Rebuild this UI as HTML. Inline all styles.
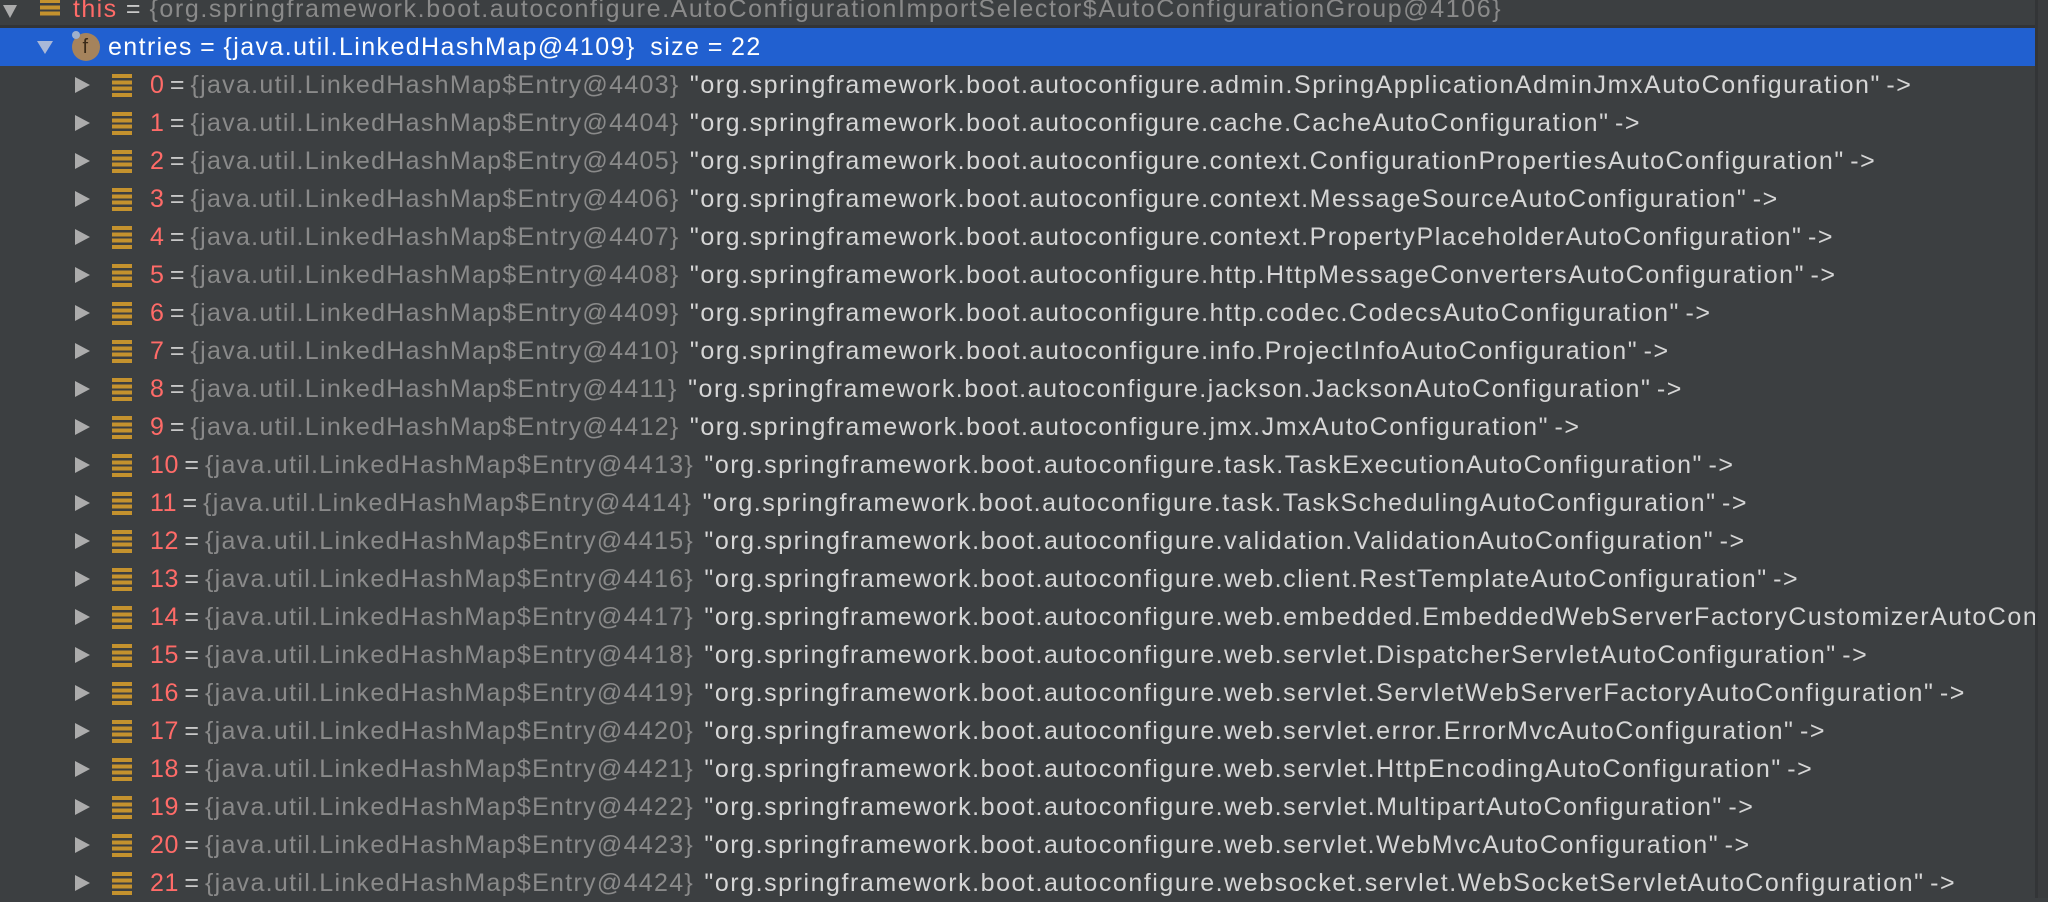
<!DOCTYPE html>
<html><head><meta charset="utf-8"><style>
body{margin:0;width:2048px;height:898px;background:#3c3f41;overflow:hidden;position:relative;font-family:"Liberation Sans",sans-serif;font-size:25px;letter-spacing:1.4px;}
.r{position:absolute;left:0;width:2035px;height:38px;line-height:38px;white-space:nowrap;overflow:hidden;}
.tri{position:absolute;width:0;height:0;border-top:8px solid transparent;border-bottom:8px solid transparent;border-left:15px solid #acacac;top:11px;left:75px}
.ic{position:absolute;left:112px;top:8px;width:20px;height:23px;background:repeating-linear-gradient(#c4922e 0 4px,transparent 4px 6.3px)}
.t{position:absolute;left:150px;top:0;word-spacing:-3px}
.n{color:#ff6b68;letter-spacing:0.6px}.e{color:#c8c8c8;letter-spacing:0.6px}.g{color:#8a8a8a;letter-spacing:1.3px}.s{color:#d6d6d6;letter-spacing:1.55px;margin-left:5px}
</style></head><body>
<div style="position:absolute;left:2035px;top:0;width:3px;height:898px;background:#333537"></div>
<div style="position:absolute;left:2038px;top:0;width:10px;height:898px;background:#3a3c3e"></div>
<div style="position:absolute;left:0;top:25px;width:2035px;height:3px;background:#323436"></div>
<div class="r" style="top:-10px">
 <div style="position:absolute;left:3px;top:15px;border-left:7px solid transparent;border-right:7px solid transparent;border-top:13px solid #acacac"></div>
 <div class="ic" style="left:40px;top:9px;height:19px"></div>
 <div class="t" style="left:73px;word-spacing:0"><span class="n" style="letter-spacing:1.4px">this</span> <span class="e">=</span> <span class="g" style="letter-spacing:1.6px">{org.springframework.boot.autoconfigure.AutoConfigurationImportSelector$AutoConfigurationGroup@4106}</span></div>
</div>
<div class="r" style="top:28px;background:#2160d0;">
 <div style="position:absolute;left:37px;top:13px;border-left:8px solid transparent;border-right:8px solid transparent;border-top:13px solid #a9b8d8"></div>
 <div style="position:absolute;left:72px;top:5px;width:28px;height:28px;border-radius:50%;background:#a5835c;color:#3a2a18;font-size:20px;line-height:28px;text-align:center">f</div>
 <div style="position:absolute;left:72px;top:3px;width:8px;height:8px;border-radius:50%;background:#9fb0cc"></div>
 <div class="t" style="left:108px;color:#fff;word-spacing:-1px">entries = {java.util.LinkedHashMap@4109}&nbsp; size = 22</div>
</div>
<div id="rows"></div>
<script>
const d=[
["admin.SpringApplicationAdminJmxAutoConfiguration"],["cache.CacheAutoConfiguration"],["context.ConfigurationPropertiesAutoConfiguration"],["context.MessageSourceAutoConfiguration"],["context.PropertyPlaceholderAutoConfiguration"],["http.HttpMessageConvertersAutoConfiguration"],["http.codec.CodecsAutoConfiguration"],["info.ProjectInfoAutoConfiguration"],["jackson.JacksonAutoConfiguration"],["jmx.JmxAutoConfiguration"],["task.TaskExecutionAutoConfiguration"],["task.TaskSchedulingAutoConfiguration"],["validation.ValidationAutoConfiguration"],["web.client.RestTemplateAutoConfiguration"],["web.embedded.EmbeddedWebServerFactoryCustomizerAutoConfiguration"],["web.servlet.DispatcherServletAutoConfiguration"],["web.servlet.ServletWebServerFactoryAutoConfiguration"],["web.servlet.error.ErrorMvcAutoConfiguration"],["web.servlet.HttpEncodingAutoConfiguration"],["web.servlet.MultipartAutoConfiguration"],["web.servlet.WebMvcAutoConfiguration"],["websocket.servlet.WebSocketServletAutoConfiguration"]];
let h="";
d.forEach((x,i)=>{h+=`<div class="r" style="top:${66+i*38}px"><div class="tri"></div><div class="ic"></div><div class="t"><span class="n">${i}</span> <span class="e">=</span> <span class="g">{java.util.LinkedHashMap$Entry@${4403+i}}</span> <span class="s">"org.springframework.boot.autoconfigure.${x[0]}" -&gt;</span></div></div>`});
document.getElementById("rows").innerHTML=h;
</script>
</body></html>
